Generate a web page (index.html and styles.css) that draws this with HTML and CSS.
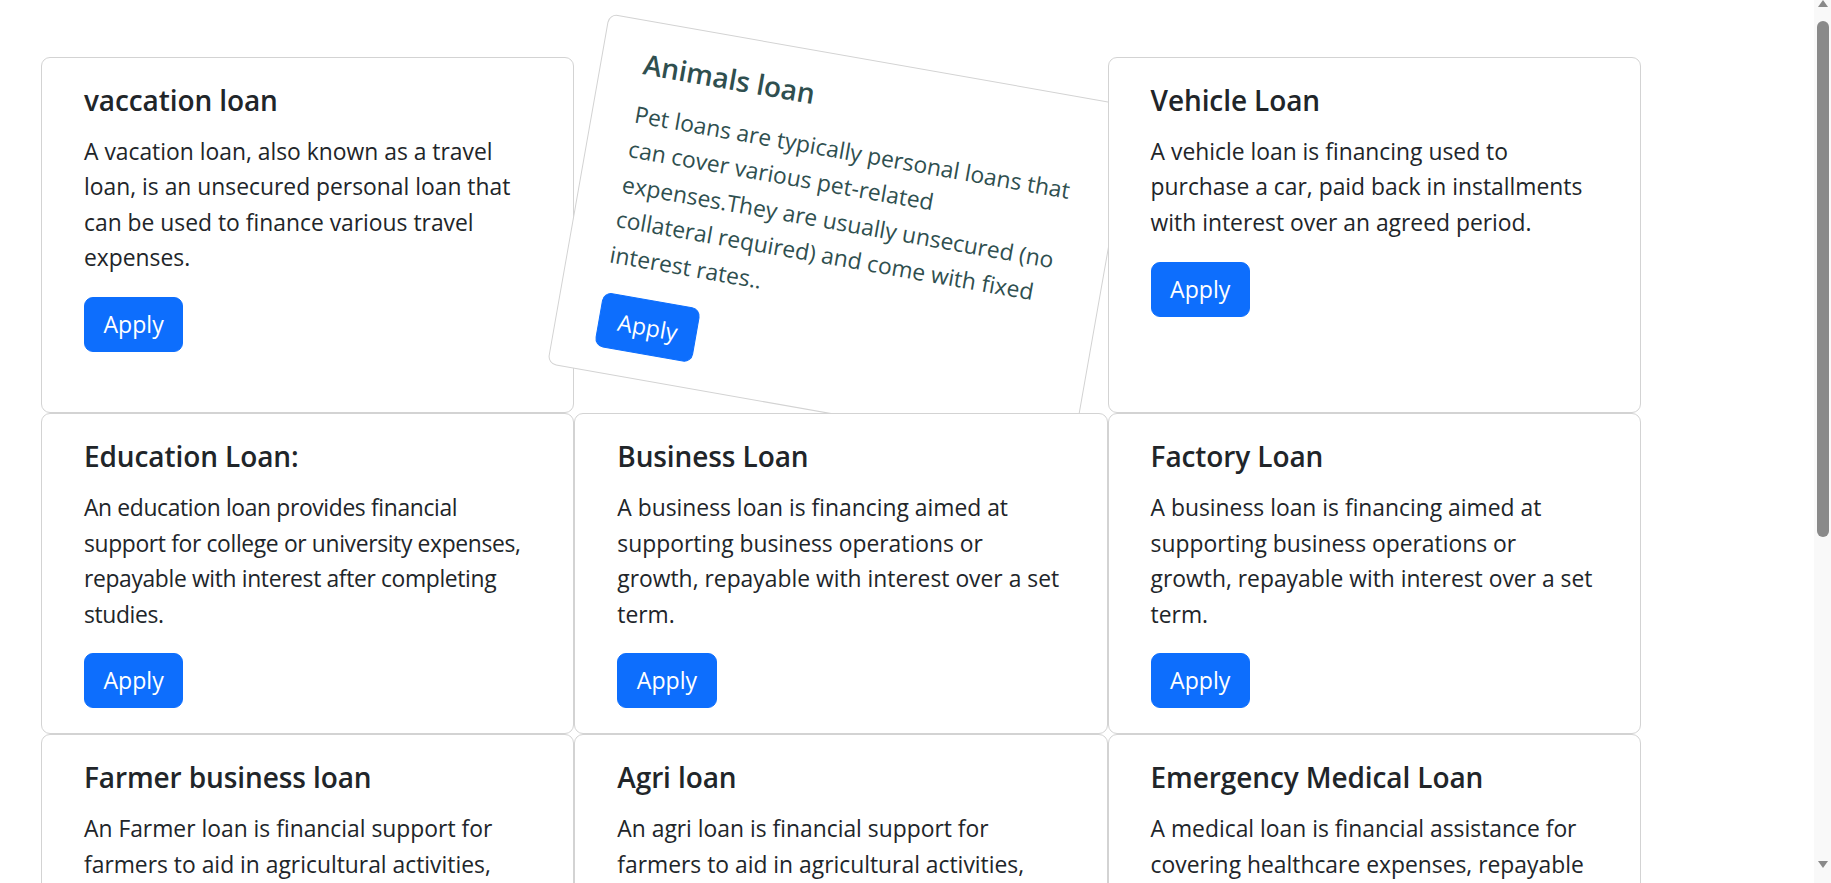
FILE: index.html
```html
<!DOCTYPE html>
<html lang="en">
<head>
<meta charset="utf-8">
<title>Loans</title>
<link rel="stylesheet" href="styles.css">
</head>
<body>
<main class="loans">
  <div class="card">
    <h5 class="card-title">vaccation loan</h5>
    <p class="card-text">A vacation loan, also known as a travel loan, is an unsecured personal loan that can be used to finance various travel expenses.</p>
    <a href="#" class="btn">Apply</a>
  </div>
  <div class="card card-tilted">
    <h5 class="card-title">Animals loan</h5>
    <p class="card-text">Pet loans are typically personal loans that can cover various pet-related expenses.They are usually unsecured (no collateral required) and come with fixed interest rates..</p>
    <a href="#" class="btn">Apply</a>
  </div>
  <div class="card">
    <h5 class="card-title">Vehicle Loan</h5>
    <p class="card-text">A vehicle loan is financing used to purchase a car, paid back in installments with interest over an agreed period.</p>
    <a href="#" class="btn">Apply</a>
  </div>
  <div class="card">
    <h5 class="card-title">Education Loan:</h5>
    <p class="card-text card-text-tight">An education loan provides financial support for college or university expenses, repayable with interest after completing studies.</p>
    <a href="#" class="btn">Apply</a>
  </div>
  <div class="card">
    <h5 class="card-title">Business Loan</h5>
    <p class="card-text">A business loan is financing aimed at supporting business operations or growth, repayable with interest over a set term.</p>
    <a href="#" class="btn">Apply</a>
  </div>
  <div class="card">
    <h5 class="card-title">Factory Loan</h5>
    <p class="card-text">A business loan is financing aimed at supporting business operations or growth, repayable with interest over a set term.</p>
    <a href="#" class="btn">Apply</a>
  </div>
  <div class="card">
    <h5 class="card-title">Farmer business loan</h5>
    <p class="card-text">An Farmer loan is financial support for farmers to aid in agricultural activities, repayable with interest over a set term.</p>
    <a href="#" class="btn">Apply</a>
  </div>
  <div class="card">
    <h5 class="card-title">Agri loan</h5>
    <p class="card-text">An agri loan is financial support for farmers to aid in agricultural activities, repayable with interest over a set term.</p>
    <a href="#" class="btn">Apply</a>
  </div>
  <div class="card">
    <h5 class="card-title">Emergency Medical Loan</h5>
    <p class="card-text">A medical loan is financial assistance for covering healthcare expenses, repayable with interest over a set term.</p>
    <a href="#" class="btn">Apply</a>
  </div>
  <div class="card">
    <h5 class="card-title">Home Loan</h5>
    <p class="card-text">A home loan is financing used to buy or build a house, repaid in monthly installments with interest.</p>
    <a href="#" class="btn">Apply</a>
  </div>
  <div class="card">
    <h5 class="card-title">Gold Loan</h5>
    <p class="card-text">A gold loan is a secured loan taken against gold jewellery, repayable with interest over a short term.</p>
    <a href="#" class="btn">Apply</a>
  </div>
  <div class="card">
    <h5 class="card-title">Personal Loan</h5>
    <p class="card-text">A personal loan is an unsecured loan for personal needs, repayable with interest in fixed installments.</p>
    <a href="#" class="btn">Apply</a>
  </div>
</main>
<div class="scrollbar" aria-hidden="true">
  <span class="sb-arrow sb-up"></span>
  <span class="sb-thumb"></span>
  <span class="sb-arrow sb-down"></span>
</div>
</body>
</html>
```

FILE: styles.css
```css
html {
  background: #fff;
  scrollbar-width: none;
}

body {
  margin: 0;
  font-family: "Open Sans", "Noto Sans", sans-serif;
  color: #212529;
  background: #fff;
}

.loans {
  display: grid;
  grid-template-columns: repeat(3, 533.3px);
  padding: 57px 0 57px 41px;
}

.card {
  position: relative;
  background: #fff;
  border: 1px solid #d3d3d3;
  border-radius: 9px;
  padding: 25px 42px 25px;
}

.card-title {
  margin: 0 0 16px;
  font-size: 28px;
  line-height: 35px;
  font-weight: 600;
  letter-spacing: -0.1px;
}

.card-text {
  margin: 0 0 21.3px;
  font-size: 22.85px;
  line-height: 35.4px;
}

.card-text-tight {
  letter-spacing: -0.35px;
}

.btn {
  display: inline-block;
  background: #0d6efd;
  color: #fff;
  border: 1px solid #0d6efd;
  border-radius: 9px;
  padding: 9px 18.5px;
  font-size: 23.1px;
  line-height: 35px;
  text-decoration: none;
}

.card-tilted {
  transform: rotate(10deg);
}

.card-tilted .card-title,
.card-tilted .card-text {
  color: #2f4f4f;
}

/* drawn scrollbar overlaying the right edge */
.scrollbar {
  position: fixed;
  top: 0;
  right: 0;
  width: 17px;
  height: 100vh;
  background: #f9f9f9;
  display: flex;
  flex-direction: column;
  align-items: center;
}

.sb-arrow {
  width: 0;
  height: 0;
  border-left: 5px solid transparent;
  border-right: 5px solid transparent;
}

.sb-up {
  border-bottom: 7px solid #8a8a8a;
  margin-top: 0;
}

.sb-thumb {
  margin-top: 14px;
  width: 12px;
  height: 516px;
  border-radius: 6px;
  background: #8a8a8a;
}

.sb-down {
  border-top: 7px solid #8a8a8a;
  margin-top: auto;
  margin-bottom: 15px;
}
```
